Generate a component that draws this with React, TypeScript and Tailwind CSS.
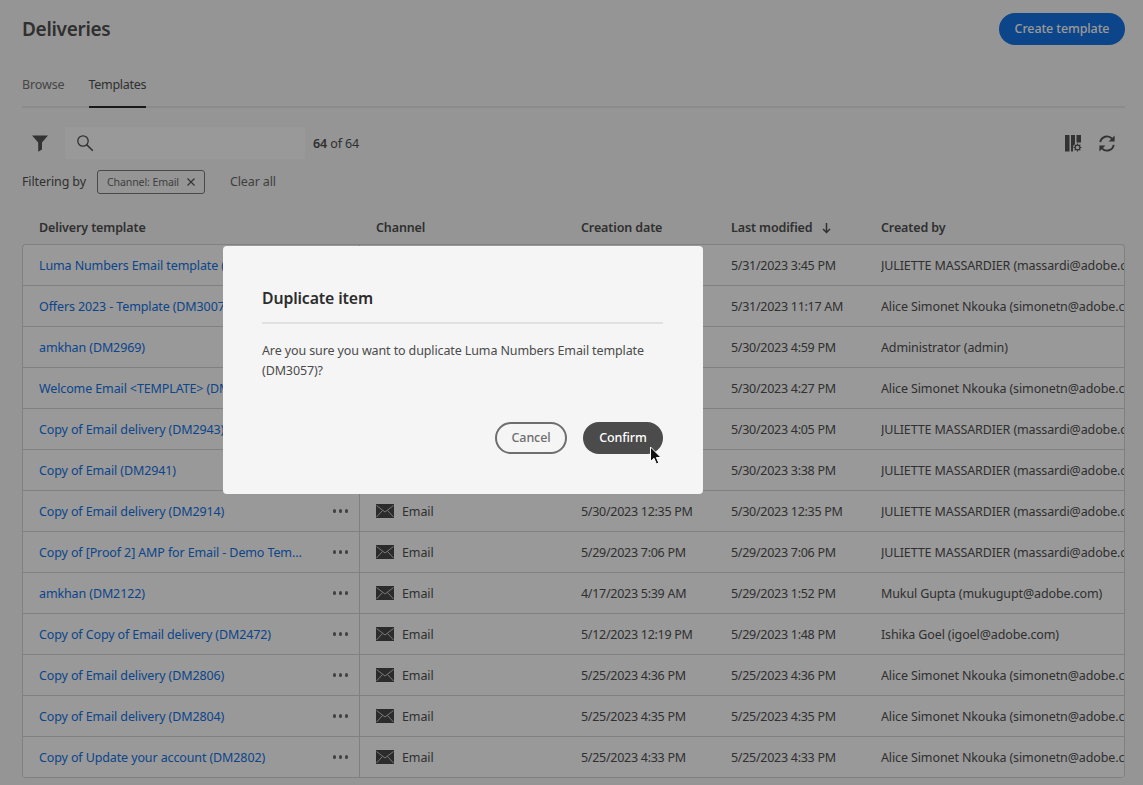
import React from "react";

const rows = [
  ["Luma Numbers Email template (DM3057)", "5/31/2023 3:45 PM", "5/31/2023 3:45 PM", "JULIETTE MASSARDIER (massardi@adobe.com)"],
  ["Offers 2023 - Template (DM3007)", "5/31/2023 11:17 AM", "5/31/2023 11:17 AM", "Alice Simonet Nkouka (simonetn@adobe.com)"],
  ["amkhan (DM2969)", "5/30/2023 4:59 PM", "5/30/2023 4:59 PM", "Administrator (admin)"],
  ["Welcome Email <TEMPLATE> (DM2950)", "5/30/2023 4:27 PM", "5/30/2023 4:27 PM", "Alice Simonet Nkouka (simonetn@adobe.com)"],
  ["Copy of Email delivery (DM2943)", "5/30/2023 4:05 PM", "5/30/2023 4:05 PM", "JULIETTE MASSARDIER (massardi@adobe.com)"],
  ["Copy of Email (DM2941)", "5/30/2023 3:38 PM", "5/30/2023 3:38 PM", "JULIETTE MASSARDIER (massardi@adobe.com)"],
  ["Copy of Email delivery (DM2914)", "5/30/2023 12:35 PM", "5/30/2023 12:35 PM", "JULIETTE MASSARDIER (massardi@adobe.com)"],
  ["Copy of [Proof 2] AMP for Email - Demo Template (DM2900)", "5/29/2023 7:06 PM", "5/29/2023 7:06 PM", "JULIETTE MASSARDIER (massardi@adobe.com)"],
  ["amkhan (DM2122)", "4/17/2023 5:39 AM", "5/29/2023 1:52 PM", "Mukul Gupta (mukugupt@adobe.com)"],
  ["Copy of Copy of Email delivery (DM2472)", "5/12/2023 12:19 PM", "5/29/2023 1:48 PM", "Ishika Goel (igoel@adobe.com)"],
  ["Copy of Email delivery (DM2806)", "5/25/2023 4:36 PM", "5/25/2023 4:36 PM", "Alice Simonet Nkouka (simonetn@adobe.com)"],
  ["Copy of Email delivery (DM2804)", "5/25/2023 4:35 PM", "5/25/2023 4:35 PM", "Alice Simonet Nkouka (simonetn@adobe.com)"],
  ["Copy of Update your account (DM2802)", "5/25/2023 4:33 PM", "5/25/2023 4:33 PM", "Alice Simonet Nkouka (simonetn@adobe.com)"],
];

const MailIcon = () => (
  <svg width="18" height="14" viewBox="0 0 18 14" className="-mt-[2px] shrink-0">
    <rect width="18" height="14" fill="#484848" />
    <path d="M0.5 1.5 L9 8 L17.5 1.5 M0.5 13 L6.5 6.5 M17.5 13 L11.5 6.5" fill="none" stroke="#d8d8d8" strokeWidth="0.9" />
  </svg>
);

const FilterIcon = () => (
  <svg width="16" height="17" viewBox="0 0 16 17">
    <path d="M0 0.5 H16 L10 7.5 V14.5 L6.2 16.8 V7.5 Z" fill="#555" />
  </svg>
);

const SearchIcon = () => (
  <svg width="18" height="18" viewBox="0 0 18 18" fill="none" stroke="#505050" strokeWidth="1.3">
    <circle cx="7" cy="7" r="5.2" />
    <path d="M11 11 L16.3 16.3" strokeWidth="1.6" strokeLinecap="round" />
  </svg>
);

const ColumnsIcon = () => (
  <svg width="17" height="17" viewBox="0 0 17 17">
    <path d="M0 0 H4.5 V16.5 H0 Z M6 0 H10 V9 A4.5 4.5 0 0 0 8 12 V16.5 H6 Z M11.5 0 H16 V7.5 H11.5 Z" fill="#555" />
    <circle cx="12.5" cy="12.5" r="2.4" fill="none" stroke="#555" strokeWidth="1.3" />
    <path d="M12.5 8.5 V10 M12.5 15 V16.5 M8.5 12.5 H10 M15 12.5 H16.5 M9.7 9.7 L10.8 10.8 M14.2 14.2 L15.3 15.3 M9.7 15.3 L10.8 14.2 M14.2 10.8 L15.3 9.7" stroke="#555" strokeWidth="1.1" />
  </svg>
);

const RefreshIcon = () => (
  <svg width="18" height="17" viewBox="0 0 18 17" fill="none">
    <path d="M2.3 7.2 A6.8 6.8 0 0 1 14 3.6" stroke="#555" strokeWidth="1.9" />
    <path d="M16.6 0.5 V6.6 H10.6 Z" fill="#555" />
    <path d="M15.7 9.8 A6.8 6.8 0 0 1 4 13.4" stroke="#555" strokeWidth="1.9" />
    <path d="M1.4 16.5 V10.4 H7.4 Z" fill="#555" />
  </svg>
);

const Cursor = () => (
  <svg width="14" height="20" viewBox="0 0 14 20" className="absolute left-[649px] top-[446px]">
    <path d="M1.5 1 V15.5 L5 12.3 L7.4 18 L9.8 17 L7.4 11.5 H12 Z" fill="#111" stroke="#fff" strokeWidth="1" />
  </svg>
);

const Row = ({ r }: { r: string[] }) => (
  <div className="flex h-[41px] border-b border-[#d5d5d5]">
    <div className="flex h-full w-[337px] shrink-0 items-center border-r border-[#d5d5d5] pl-4 pr-[11px] pt-[2px]">
      <a className="flex-1 truncate text-[#1473e6]">{r[0]}</a>
      <span className="-mt-[2px] ml-7 flex gap-[2.5px]">
        <i className="h-[3.5px] w-[3.5px] rounded-full bg-[#6e6e6e]" />
        <i className="h-[3.5px] w-[3.5px] rounded-full bg-[#6e6e6e]" />
        <i className="h-[3.5px] w-[3.5px] rounded-full bg-[#6e6e6e]" />
      </span>
    </div>
    <div className="flex w-[221px] shrink-0 items-center gap-2 pl-4 pt-[2px]">
      <MailIcon />
      Email
    </div>
    <div className="flex w-[150px] shrink-0 items-center pt-[2px] tracking-[-0.28px]">{r[1]}</div>
    <div className="flex w-[150px] shrink-0 items-center pt-[2px] tracking-[-0.28px]">{r[2]}</div>
    <div className="flex min-w-0 flex-1 items-center overflow-hidden whitespace-nowrap pt-[2px]">{r[3]}</div>
  </div>
);

export default function App() {
  return (
    <div className="relative h-[785px] w-[1143px] overflow-hidden bg-[#f8f8f8] text-[12.5px] leading-[18px] tracking-[-0.12px] text-[#505050] [font-family:'Noto_Sans',sans-serif]">
      <div className="pl-[22px] pr-[18px]">
        {/* Header */}
        <div className="flex h-[58px] items-center justify-between">
          <h1 className="text-[19px] font-semibold tracking-[-0.3px] text-[#505050]">Deliveries</h1>
          <button className="h-[32px] w-[126px] rounded-full bg-[#1473e6] font-medium text-white">Create template</button>
        </div>

        {/* Tabs */}
        <div className="flex h-[50px] gap-6 border-b-2 border-[#e8e8e8]">
          <span className="pt-[18px] text-[#747474]">Browse</span>
          <span className="-mb-[2px] border-b-2 border-[#2c2c2c] pt-[18px] tracking-[-0.3px] text-[#505050]">Templates</span>
        </div>

        {/* Toolbar */}
        <div className="mt-[19px] flex h-[32px] items-center">
          <span className="ml-[10px] mr-[17px] flex"><FilterIcon /></span>
          <div className="flex h-[32px] w-[240px] items-center rounded-[3px] bg-white pl-[11px]"><SearchIcon /></div>
          <span className="ml-2 pt-[2px]"><b className="font-semibold">64</b> of 64</span>
          <span className="ml-auto mr-[9px] flex gap-[16px]"><ColumnsIcon /><RefreshIcon /></span>
        </div>

        {/* Active filters */}
        <div className="mt-[11px] flex h-[24px] items-center">
          <span>Filtering by</span>
          <span className="ml-[11px] flex h-[24px] w-[108px] items-center justify-center gap-[8px] rounded-[3px] border border-[#7a7a7a] text-[10.6px] text-[#6a6a6a]">
            Channel: Email
            <svg width="8" height="8" viewBox="0 0 8 8" stroke="#555" strokeWidth="1.1"><path d="M0.5 0.5 L7.5 7.5 M7.5 0.5 L0.5 7.5" /></svg>
          </span>
          <span className="ml-[25px] text-[#6a6a6a]">Clear all</span>
        </div>

        {/* Table header */}
        <div className="mt-[20px] flex h-[30px] items-center pb-[2px] font-semibold text-[#505050]">
          <div className="w-[354px] shrink-0 pl-[17px]">Delivery template</div>
          <div className="w-[205px] shrink-0">Channel</div>
          <div className="w-[150px] shrink-0">Creation date</div>
          <div className="flex w-[150px] shrink-0 items-center gap-[10px]">
            Last modified
            <svg width="9" height="11" viewBox="0 0 9 11" fill="none" stroke="#505050" strokeWidth="1.5"><path d="M4.5 0 V9.5 M1 6 L4.5 9.5 L8 6" /></svg>
          </div>
          <div>Created by</div>
        </div>

        {/* Table */}
        <div className="overflow-hidden rounded-[4px] border-x border-t border-[#d5d5d5] bg-white">
          {rows.map((r) => (
            <Row key={r[0]} r={r} />
          ))}
        </div>
      </div>

      {/* Underlay */}
      <div className="absolute inset-0 bg-black/40" />

      {/* Dialog */}
      <div className="absolute left-[223px] top-[246px] h-[248px] w-[480px] rounded-[4px] bg-[#f5f5f5] px-[39px] pt-[41px] text-[#4b4b4b]">
        <h2 className="text-[15.8px] font-semibold leading-[22px] text-[#2c2c2c]">Duplicate item</h2>
        <div className="mt-[13px] h-[2px] w-[401px] bg-[#e1e1e1]" />
        <p className="mt-[17px] w-[401px] leading-[20px]">Are you sure you want to duplicate Luma Numbers Email template (DM3057)?</p>
        <div className="mt-[41px] flex w-[401px] justify-end gap-4">
          <button className="h-[32px] w-[72px] rounded-full border-2 border-[#6e6e6e] font-medium text-[#6e6e6e]">Cancel</button>
          <button className="h-[32px] w-[80px] rounded-full bg-[#4b4b4b] font-medium text-white">Confirm</button>
        </div>
      </div>
      <Cursor />
    </div>
  );
}
